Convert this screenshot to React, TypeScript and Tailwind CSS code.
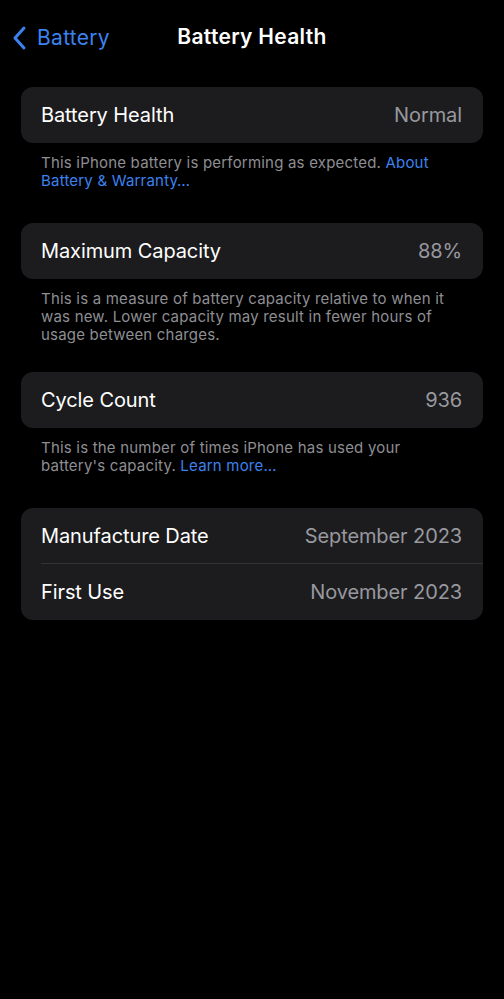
import React from "react";

const font = { fontFamily: "Inter, 'Noto Sans', sans-serif" };

function Row({ label, value, divider }: { label: string; value: string; divider?: boolean }) {
  return (
    <div className="relative flex h-[56px] items-center justify-between pl-[20px] pr-[21px]">
      <span className="text-[20px] tracking-[-0.1px] text-white">{label}</span>
      <span className="text-[20px] tracking-[-0.1px] text-[#98989f]">{value}</span>
      {divider && <div className="absolute bottom-0 left-[20px] right-0 h-px bg-[#333336]" />}
    </div>
  );
}

function Footer({ children }: { children: React.ReactNode }) {
  return (
    <p className="pl-[20px] pr-[24px] pt-[11px] text-[15px] leading-[18px] tracking-[0.2px] text-[#8e8e93]">
      {children}
    </p>
  );
}

export default function App() {
  return (
    <div className="min-h-[999px] w-full bg-black" style={font}>
      {/* Nav bar */}
      <div className="relative flex h-[72px] items-center justify-center">
        <div className="absolute left-[10px] top-[22px] flex items-center gap-[9px] text-[#3c82ef]">
          <svg width="18" height="26" viewBox="0 0 18 26" fill="none">
            <path d="M14 3L5 13l9 10" stroke="currentColor" strokeWidth="3" strokeLinecap="round" strokeLinejoin="round" />
          </svg>
          <span className="text-[21px] tracking-[0.3px]">Battery</span>
        </div>
        <h1 className="pt-px text-[21px] font-semibold tracking-[0.3px] text-white">Battery Health</h1>
      </div>

      <div className="px-[21px] pt-[15px]">
        <div className="rounded-[12px] bg-[#1c1c1e]">
          <Row label="Battery Health" value="Normal" />
        </div>
        <Footer>
          This iPhone battery is performing as expected.{" "}
          <span className="text-[#3c82ef]">About Battery &amp; Warranty…</span>
        </Footer>

        <div className="mt-[33px] rounded-[12px] bg-[#1c1c1e]">
          <Row label="Maximum Capacity" value="88%" />
        </div>
        <Footer>
          This is a measure of battery capacity relative to when it was new. Lower capacity may result in fewer hours of
          usage between charges.
        </Footer>

        <div className="mt-[28px] rounded-[12px] bg-[#1c1c1e]">
          <Row label="Cycle Count" value="936" />
        </div>
        <Footer>
          This is the number of times iPhone has used your battery's capacity.{" "}
          <span className="text-[#3c82ef]">Learn more…</span>
        </Footer>

        <div className="mt-[33px] rounded-[12px] bg-[#1c1c1e]">
          <Row label="Manufacture Date" value="September 2023" divider />
          <Row label="First Use" value="November 2023" />
        </div>
      </div>
    </div>
  );
}
